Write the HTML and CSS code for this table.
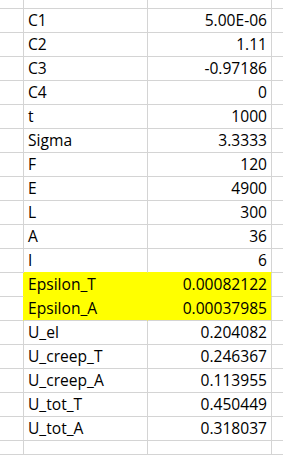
FILE: index.html
```html
<!DOCTYPE html>
<html>
<head>
<meta charset="utf-8">
<link rel="stylesheet" href="styles.css">
</head>
<body>
<div class="sheet">
  <div class="c a"></div><div class="c"></div><div class="c"></div><div class="c d"></div>

  <div class="c a"></div><div class="c lbl">C1</div><div class="c num">5.00E-06</div><div class="c d"></div>
  <div class="c a"></div><div class="c lbl">C2</div><div class="c num">1.11</div><div class="c d"></div>
  <div class="c a"></div><div class="c lbl">C3</div><div class="c num">-0.97186</div><div class="c d"></div>
  <div class="c a"></div><div class="c lbl">C4</div><div class="c num">0</div><div class="c d"></div>
  <div class="c a"></div><div class="c lbl">t</div><div class="c num">1000</div><div class="c d"></div>
  <div class="c a"></div><div class="c lbl">Sigma</div><div class="c num">3.3333</div><div class="c d"></div>
  <div class="c a"></div><div class="c lbl">F</div><div class="c num">120</div><div class="c d"></div>
  <div class="c a"></div><div class="c lbl">E</div><div class="c num">4900</div><div class="c d"></div>
  <div class="c a"></div><div class="c lbl">L</div><div class="c num">300</div><div class="c d"></div>
  <div class="c a"></div><div class="c lbl">A</div><div class="c num">36</div><div class="c d"></div>
  <div class="c a"></div><div class="c lbl above-hl">I</div><div class="c num above-hl">6</div><div class="c d"></div>

  <div class="c a hl-edge"></div><div class="c lbl hl hl-top">Epsilon_T</div><div class="c num hl hl-top-r">0.00082122</div><div class="c d"></div>
  <div class="c a hl-edge"></div><div class="c lbl hl hl-bot">Epsilon_A</div><div class="c num hl">0.00037985</div><div class="c d"></div>

  <div class="c a"></div><div class="c lbl">U_el</div><div class="c num">0.204082</div><div class="c d"></div>
  <div class="c a"></div><div class="c lbl">U_creep_T</div><div class="c num">0.246367</div><div class="c d"></div>
  <div class="c a"></div><div class="c lbl">U_creep_A</div><div class="c num">0.113955</div><div class="c d"></div>
  <div class="c a"></div><div class="c lbl">U_tot_T</div><div class="c num">0.450449</div><div class="c d"></div>
  <div class="c a"></div><div class="c lbl">U_tot_A</div><div class="c num">0.318037</div><div class="c d"></div>

  <div class="c a"></div><div class="c"></div><div class="c"></div><div class="c d"></div>
</div>
</body>
</html>
```
FILE: styles.css
```css
html, body {
  margin: 0;
  padding: 0;
  background: #ffffff;
}
body {
  width: 283px;
  height: 455px;
  overflow: hidden;
}
.sheet {
  display: grid;
  grid-template-columns: 24px 124px 124px 1fr;
  grid-template-rows: 9px repeat(18, 24px) 1fr;
  height: 455px;
  font-family: "Open Sans", "Liberation Sans", sans-serif;
  font-size: 15.6px;
  color: #000000;
}
.c {
  box-sizing: border-box;
  border-right: 1px solid #d4d4d4;
  border-bottom: 1px solid #d4d4d4;
  line-height: 23px;
  white-space: nowrap;
  overflow: hidden;
}
.d {
  border-right: none;
}
.lbl {
  padding-left: 4px;
}
.num {
  text-align: right;
  padding-right: 4px;
}
.hl {
  background: #ffff00;
}
.above-hl {
  border-bottom-color: #ffff00;
}
.hl-edge {
  border-right-color: #ffff00;
}
.hl-top {
  border-right-color: #ffff00;
  border-bottom-color: #ffff00;
}
.hl-top-r {
  border-bottom-color: #ffff00;
}
.hl-bot {
  border-right-color: #ffff00;
}
```
